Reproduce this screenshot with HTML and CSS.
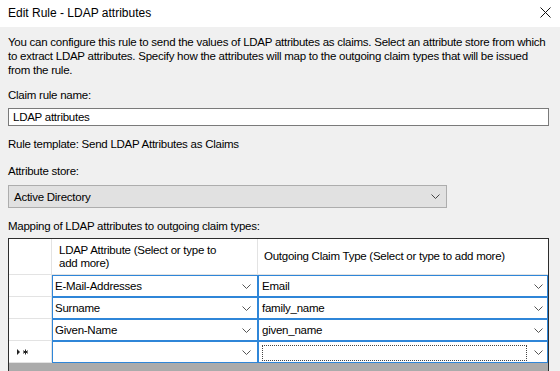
FILE: index.html
```html
<!DOCTYPE html>
<html>
<head>
    <meta charset="UTF-8">
    <title>Edit Rule - LDAP attributes</title>
    <link rel="stylesheet" href="styles.css">
</head>
<body>
<div class="titlebar">
    <span class="title">Edit Rule - LDAP attributes</span>
    <svg class="close" width="11" height="11" viewBox="0 0 11 11">
        <path d="M0.5 0.5 L10.5 10.5 M10.5 0.5 L0.5 10.5" stroke="#111" stroke-width="1" fill="none"/>
    </svg>
</div>

<div class="dialog">
    <p class="intro">You can configure this rule to send the values of LDAP attributes as claims. Select an attribute store from which<br>to extract LDAP attributes. Specify how the attributes will map to the outgoing claim types that will be issued<br>from the rule.</p>

    <div class="label label-name">Claim rule name:</div>
    <div class="textbox">LDAP attributes</div>

    <div class="label label-template">Rule template: Send LDAP Attributes as Claims</div>

    <div class="label label-store">Attribute store:</div>
    <div class="select">
        <span>Active Directory</span>
        <svg class="chevron" width="9" height="5" viewBox="0 0 9 5"><path d="M0.5 0.5 L4.5 4.5 L8.5 0.5" stroke="#444" fill="none"/></svg>
    </div>

    <div class="label label-mapping">Mapping of LDAP attributes to outgoing claim types:</div>

    <div class="grid">
        <div class="head-cell row-head"></div>
        <div class="head-cell col-one">LDAP Attribute (Select or type to<br>add more)</div>
        <div class="head-cell col-two">Outgoing Claim Type (Select or type to add more)</div>

        <div class="row-head"></div>
        <div class="cell"><div class="combo"><span>E-Mail-Addresses</span><svg class="chevron" width="9" height="5" viewBox="0 0 9 5"><path d="M0.5 0.5 L4.5 4.5 L8.5 0.5" stroke="#555" fill="none"/></svg></div></div>
        <div class="cell"><div class="combo combo-wide"><span>Email</span><svg class="chevron" width="9" height="5" viewBox="0 0 9 5"><path d="M0.5 0.5 L4.5 4.5 L8.5 0.5" stroke="#555" fill="none"/></svg></div></div>

        <div class="row-head"></div>
        <div class="cell"><div class="combo"><span>Surname</span><svg class="chevron" width="9" height="5" viewBox="0 0 9 5"><path d="M0.5 0.5 L4.5 4.5 L8.5 0.5" stroke="#555" fill="none"/></svg></div></div>
        <div class="cell"><div class="combo combo-wide"><span>family_name</span><svg class="chevron" width="9" height="5" viewBox="0 0 9 5"><path d="M0.5 0.5 L4.5 4.5 L8.5 0.5" stroke="#555" fill="none"/></svg></div></div>

        <div class="row-head"></div>
        <div class="cell"><div class="combo"><span>Given-Name</span><svg class="chevron" width="9" height="5" viewBox="0 0 9 5"><path d="M0.5 0.5 L4.5 4.5 L8.5 0.5" stroke="#555" fill="none"/></svg></div></div>
        <div class="cell"><div class="combo combo-wide"><span>given_name</span><svg class="chevron" width="9" height="5" viewBox="0 0 9 5"><path d="M0.5 0.5 L4.5 4.5 L8.5 0.5" stroke="#555" fill="none"/></svg></div></div>

        <div class="row-head new-row">
            <svg width="12" height="6" viewBox="0 0 12 6">
                <path d="M0 0 L3 3 L0 6 Z" fill="#222"/>
                <path d="M8.5 0.5 V5.5 M6 1.8 L11 4.2 M6 4.2 L11 1.8" stroke="#222" stroke-width="1"/>
            </svg>
        </div>
        <div class="cell"><div class="combo"><span></span><svg class="chevron" width="9" height="5" viewBox="0 0 9 5"><path d="M0.5 0.5 L4.5 4.5 L8.5 0.5" stroke="#555" fill="none"/></svg></div></div>
        <div class="cell"><div class="combo combo-wide"><span class="focus-box"></span><svg class="chevron" width="9" height="5" viewBox="0 0 9 5"><path d="M0.5 0.5 L4.5 4.5 L8.5 0.5" stroke="#555" fill="none"/></svg></div></div>

        <div class="grid-fill"></div>
    </div>
</div>
</body>
</html>
```

FILE: styles.css
```css
html {
    overflow: hidden;
}

body {
    margin: 0;
    background: #f0f0f0;
    font-family: "Liberation Sans", Arial, sans-serif;
    font-size: 11.5px;
    letter-spacing: -0.25px;
    color: #000;
    overflow: hidden;
    height: 371px;
}

.titlebar {
    height: 27px;
    background: #fff;
    display: flex;
    align-items: center;
    justify-content: space-between;
    padding: 0 9px 2px 8px;
    box-sizing: border-box;
}

.title {
    font-size: 12px;
    letter-spacing: 0;
}

.close {
    display: block;
}

.dialog {
    padding: 8px 0 0 8px;
}

.intro {
    margin: 0;
    line-height: 14px;
    white-space: nowrap;
}

.label {
    line-height: 14px;
}

.label-name {
    margin-top: 11px;
}

.textbox {
    margin-top: 6px;
    width: 541px;
    height: 18px;
    box-sizing: border-box;
    border: 1px solid #7a7a7a;
    background: #fff;
    line-height: 16px;
    padding-left: 4px;
}

.label-template {
    margin-top: 11px;
}

.label-store {
    margin-top: 13px;
}

.select {
    margin-top: 7px;
    width: 439px;
    height: 23px;
    box-sizing: border-box;
    border: 1px solid #adadad;
    background: #e1e1e1;
    display: flex;
    align-items: center;
    justify-content: space-between;
    padding: 0 6px 0 5px;
}

.chevron {
    display: block;
}

.label-mapping {
    margin-top: 11px;
}

.grid {
    margin-top: 5px;
    width: 541px;
    box-sizing: border-box;
    border: 1px solid #2d2d2d;
    border-bottom: none;
    display: grid;
    grid-template-columns: 43px 206px 290px;
    grid-auto-rows: 22px;
    grid-template-rows: 36px;
    background: #fff;
}

.head-cell {
    background: #fff;
    border-right: 1px solid #e3e3e3;
    border-bottom: 1px solid #e3e3e3;
    display: flex;
    align-items: center;
    line-height: 13px;
}

.col-one {
    padding-left: 7px;
}

.col-two {
    padding-left: 6px;
    border-right: none;
}

.row-head {
    background: #fff;
    border-right: 1px solid #e3e3e3;
    border-bottom: 1px solid #e3e3e3;
}

.new-row {
    display: flex;
    align-items: center;
    padding-left: 8px;
}

.cell {
    background: #fff;
}

.combo {
    height: 22px;
    box-sizing: border-box;
    border: 1px solid #2f86d8;
    display: flex;
    align-items: center;
    justify-content: space-between;
    padding: 0 6px 0 2px;
}

.combo-wide {
    padding: 0 4px 0 3px;
}

.focus-box {
    display: block;
    width: 265px;
    height: 16px;
    box-sizing: border-box;
    border: 1px dotted #444;
    margin-top: 2px;
}

.grid-fill {
    grid-column: 1 / -1;
    background: #ababab;
    height: 8px;
}
```
